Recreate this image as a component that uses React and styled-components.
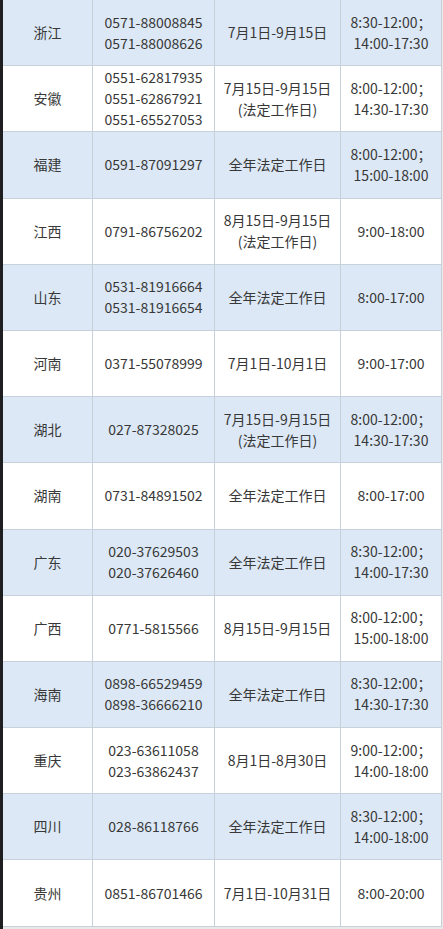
import React from "react";
import styled, { createGlobalStyle } from "styled-components";

const GlobalStyle = createGlobalStyle`
  html, body {
    margin: 0;
    padding: 0;
    background: #e8e9eb;
  }
  body {
    font-family: "Noto Sans CJK SC", "Noto Sans", sans-serif;
    color: #333;
  }
`;

const Page = styled.div`
  display: flex;
  width: 443px;
  height: 929px;
  overflow: hidden;
  background: #e8e9eb;
`;

const EdgeBar = styled.div`
  width: 3px;
  flex: none;
  background: #1f1f21;
`;

const Table = styled.div`
  display: grid;
  grid-template-columns: 89px 121px 125px 100px;
  grid-auto-rows: 65.2px;
  gap: 1px;
  align-self: flex-start;
  background: #c8d0da;
  border-right: 1px solid #c8d0da;
  border-bottom: 1px solid #c8d0da;
`;

const Cell = styled.div`
  display: flex;
  align-items: center;
  justify-content: center;
  text-align: center;
  background: ${p => (p.$shaded ? "#dce8f5" : "#ffffff")};
  font-size: 14px;
  line-height: 21px;
  white-space: pre-line;
  color: #383838;
`;

// hours block is centred as a whole, lines inside are left aligned
const Hours = styled.div`
  text-align: left;
  white-space: pre;
`;

const rows = [
  ["浙江", "0571-88008845\n0571-88008626", "7月1日-9月15日", "8:30-12:00；\n 14:00-17:30"],
  ["安徽", "0551-62817935\n0551-62867921\n0551-65527053", "7月15日-9月15日\n(法定工作日)", "8:00-12:00；\n 14:30-17:30"],
  ["福建", "0591-87091297", "全年法定工作日", "8:00-12:00；\n 15:00-18:00"],
  ["江西", "0791-86756202", "8月15日-9月15日\n(法定工作日)", "9:00-18:00"],
  ["山东", "0531-81916664\n0531-81916654", "全年法定工作日", "8:00-17:00"],
  ["河南", "0371-55078999", "7月1日-10月1日", "9:00-17:00"],
  ["湖北", "027-87328025", "7月15日-9月15日\n(法定工作日)", "8:00-12:00；\n 14:30-17:30"],
  ["湖南", "0731-84891502", "全年法定工作日", "8:00-17:00"],
  ["广东", "020-37629503\n020-37626460", "全年法定工作日", "8:30-12:00；\n 14:00-17:30"],
  ["广西", "0771-5815566", "8月15日-9月15日", "8:00-12:00；\n 15:00-18:00"],
  ["海南", "0898-66529459\n0898-36666210", "全年法定工作日", "8:30-12:00；\n 14:30-17:30"],
  ["重庆", "023-63611058\n023-63862437", "8月1日-8月30日", "9:00-12:00；\n 14:00-18:00"],
  ["四川", "028-86118766", "全年法定工作日", "8:30-12:00；\n 14:00-18:00"],
  ["贵州", "0851-86701466", "7月1日-10月31日", "8:00-20:00"]
];

export default function App() {
  return (
    <Page>
      <GlobalStyle />
      <EdgeBar />
      <Table>
        {rows.map((row, i) =>
          row.map((text, j) => (
            <Cell key={i + "-" + j} $shaded={i % 2 === 0}>
              {j === 3 ? <Hours>{text}</Hours> : text}
            </Cell>
          ))
        )}
      </Table>
    </Page>
  );
}
